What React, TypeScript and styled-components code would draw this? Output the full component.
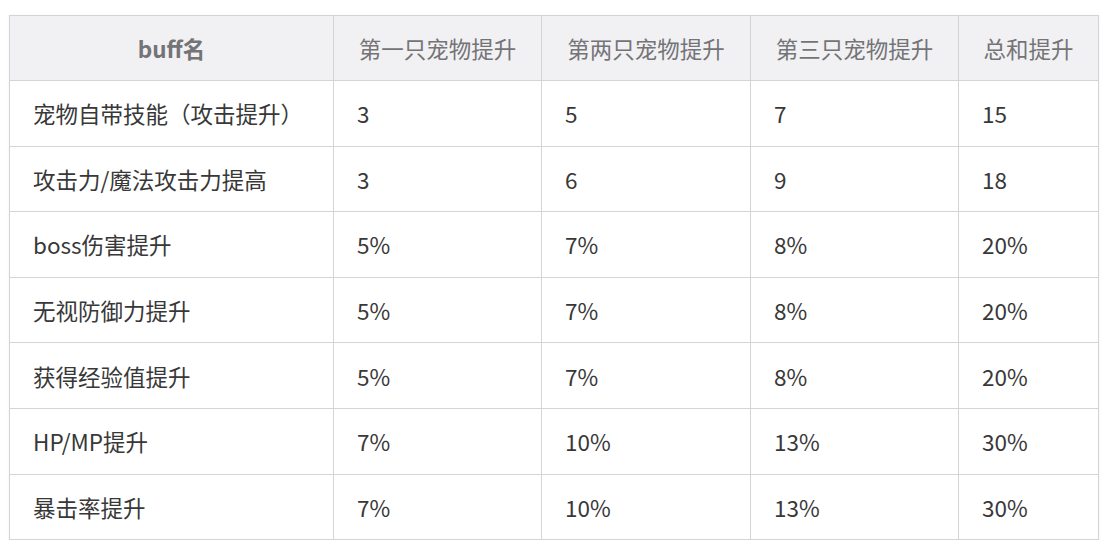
import styled, { createGlobalStyle } from 'styled-components';

const GlobalStyle = createGlobalStyle`
  body {
    margin: 0;
    background: #ffffff;
    font-family: "Noto Sans CJK SC", "Noto Sans", sans-serif;
  }
`;

const Page = styled.div`
  padding: 15px 0 0 9px;
`;

const Table = styled.table`
  width: 1089px;
  border-collapse: collapse;
  table-layout: fixed;
  border: 1px solid #cfcfd2;
  box-shadow: 0 1px 3px rgba(0, 0, 0, 0.06);
`;

const HeadRow = styled.tr`
  height: 65px;
  background: #f1f1f4;
`;

const BodyRow = styled.tr`
  height: 65.6px;
  background: #ffffff;
`;

const Th = styled.th<{ $bold?: boolean }>`
  border: 1px solid #d4d4d6;
  text-align: center;
  font-size: 22.5px;
  font-weight: ${(p) => (p.$bold ? 700 : 400)};
  color: #747477;
  padding: 0 4px;
  white-space: nowrap;
`;

const Td = styled.td`
  border: 1px solid #d4d4d6;
  font-size: 22.5px;
  color: #383838;
  padding: 0 0 0 23px;
  white-space: nowrap;
`;

const columns = [
  { title: 'buff名', width: 324, bold: true },
  { title: '第一只宠物提升', width: 208 },
  { title: '第两只宠物提升', width: 209 },
  { title: '第三只宠物提升', width: 208 },
  { title: '总和提升', width: 140 },
];

const rows = [
  ['宠物自带技能（攻击提升）', '3', '5', '7', '15'],
  ['攻击力/魔法攻击力提高', '3', '6', '9', '18'],
  ['boss伤害提升', '5%', '7%', '8%', '20%'],
  ['无视防御力提升', '5%', '7%', '8%', '20%'],
  ['获得经验值提升', '5%', '7%', '8%', '20%'],
  ['HP/MP提升', '7%', '10%', '13%', '30%'],
  ['暴击率提升', '7%', '10%', '13%', '30%'],
];

export default function App() {
  return (
    <Page>
      <GlobalStyle />
      <Table>
        <colgroup>
          {columns.map((c) => (
            <col key={c.title} style={{ width: c.width }} />
          ))}
        </colgroup>
        <thead>
          <HeadRow>
            {columns.map((c) => (
              <Th key={c.title} $bold={c.bold}>
                {c.title}
              </Th>
            ))}
          </HeadRow>
        </thead>
        <tbody>
          {rows.map((r) => (
            <BodyRow key={r[0]}>
              {r.map((cell, i) => (
                <Td key={i}>{cell}</Td>
              ))}
            </BodyRow>
          ))}
        </tbody>
      </Table>
    </Page>
  );
}
